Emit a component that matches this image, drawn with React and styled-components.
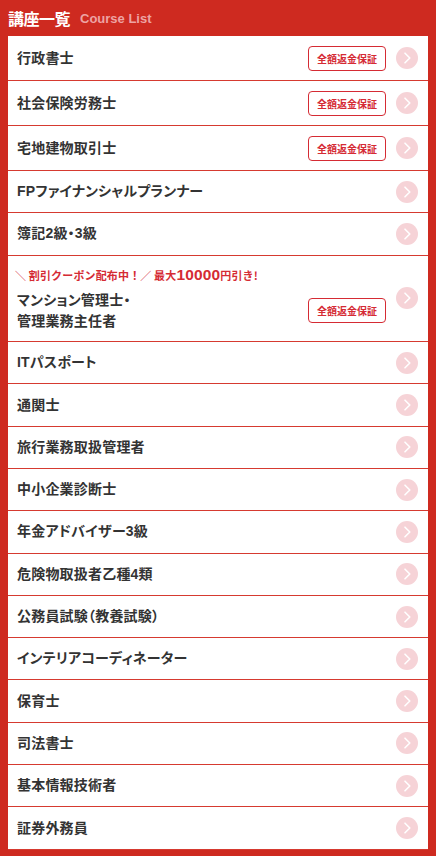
import React from 'react';
import styled, { createGlobalStyle } from 'styled-components';

const courses = [
  { name: '行政書士', guarantee: true },
  { name: '社会保険労務士', guarantee: true },
  { name: '宅地建物取引士', guarantee: true },
  { name: 'FPファイナンシャルプランナー' },
  { name: '簿記2級・3級' },
  { name: ['マンション管理士・', '管理業務主任者'], guarantee: true, coupon: true },
  { name: 'ITパスポート' },
  { name: '通関士' },
  { name: '旅行業務取扱管理者' },
  { name: '中小企業診断士' },
  { name: '年金アドバイザー3級' },
  { name: '危険物取扱者乙種4類' },
  { name: '公務員試験（教養試験）' },
  { name: 'インテリアコーディネーター' },
  { name: '保育士' },
  { name: '司法書士' },
  { name: '基本情報技術者' },
  { name: '証券外務員' },
];

const Arrow = () => (
  <Circle>
    <svg width="22" height="22" viewBox="0 0 22 22">
      <path d="M9 6.2 L13.8 11 L9 15.8" fill="none" stroke="#fff" strokeWidth="1.6" strokeLinecap="round" strokeLinejoin="round" />
    </svg>
  </Circle>
);

const App = () => {
  return (
    <>
      <GlobalStyle />
      <Page>
        <Header>
          <Title>講座一覧</Title>
          <SubTitle>Course List</SubTitle>
        </Header>
        <List>
          {courses.map((c, i) => (
            <Row key={i} $badge={c.guarantee}>
              <Main>
                {c.coupon && (
                  <Coupon>
                    ＼ 割引クーポン配布中！／ 最大<Big>10000</Big>円引き!
                  </Coupon>
                )}
                <NameLine>
                  <Name>
                    {Array.isArray(c.name)
                      ? c.name.map((n, j) => <span key={j}>{n}<br /></span>)
                      : c.name}
                  </Name>
                  {c.guarantee && <Badge>全額返金保証</Badge>}
                </NameLine>
              </Main>
              <Arrow />
            </Row>
          ))}
        </List>
      </Page>
    </>
  );
};

const GlobalStyle = createGlobalStyle`
  html, body {
    margin: 0;
    padding: 0;
    background: #ce2a20;
  }
  body {
    font-family: "Liberation Sans", "Noto Sans CJK JP", sans-serif;
  }
`;

const Page = styled.div`
  min-height: 856px;
  background: #ce2a20;
  padding: 0 8px 7px;
  box-sizing: border-box;
`;

const Header = styled.div`
  height: 36px;
  display: flex;
  align-items: center;
  gap: 10px;
`;

const Title = styled.h2`
  margin: 0;
  font-size: 16px;
  font-weight: 700;
  color: #fff;
  font-family: "Noto Sans CJK JP", sans-serif;
  letter-spacing: -0.5px;
`;

const SubTitle = styled.span`
  font-size: 13px;
  font-weight: 700;
  color: #eda3a3;
  font-family: "Liberation Sans", "Noto Sans CJK JP", sans-serif;
`;

const List = styled.ul`
  list-style: none;
  margin: 0;
  padding: 0;
  background: #fff;
`;

const Row = styled.li`
  display: flex;
  align-items: center;
  box-sizing: border-box;
  min-height: 42.3px;
  padding: ${(p) => (p.$badge ? '9.5px' : '9px')} 10px ${(p) => (p.$badge ? '9.5px' : '9px')} 9px;
  border-bottom: 1px solid #d63a30;
`;

const Main = styled.div`
  flex: 1;
  display: flex;
  flex-direction: column;
  min-width: 0;
`;

const Coupon = styled.div`
  font-size: 11px;
  font-weight: 700;
  color: #d52b34;
  line-height: 19px;
  letter-spacing: 0.15px;
  margin: -0.5px 0 5px -2px;
  font-family: "Noto Sans CJK JP", sans-serif;
  white-space: nowrap;
`;

const Big = styled.span`
  font-size: 15.5px;
  font-family: "Liberation Sans", sans-serif;
`;

const NameLine = styled.div`
  display: flex;
  align-items: center;
  justify-content: space-between;
  gap: 10px;
`;

const Name = styled.div`
  font-size: 14px;
  font-weight: 700;
  line-height: 21px;
  letter-spacing: 0.2px;
  color: #333;
  font-family: "Liberation Sans", "Noto Sans CJK JP", sans-serif;
  font-feature-settings: "palt";
`;

const Badge = styled.span`
  flex-shrink: 0;
  box-sizing: border-box;
  width: 78px;
  height: 25px;
  display: flex;
  align-items: center;
  justify-content: center;
  border: 1px solid #d52b34;
  border-radius: 4px;
  color: #d52b34;
  font-size: 10px;
  font-weight: 700;
  font-family: "Noto Sans CJK JP", sans-serif;
`;

const Circle = styled.span`
  flex-shrink: 0;
  width: 22px;
  height: 22px;
  border-radius: 50%;
  background: #f6d3d7;
  margin-left: 10px;
  display: flex;
  svg {
    display: block;
  }
`;

export default App;
